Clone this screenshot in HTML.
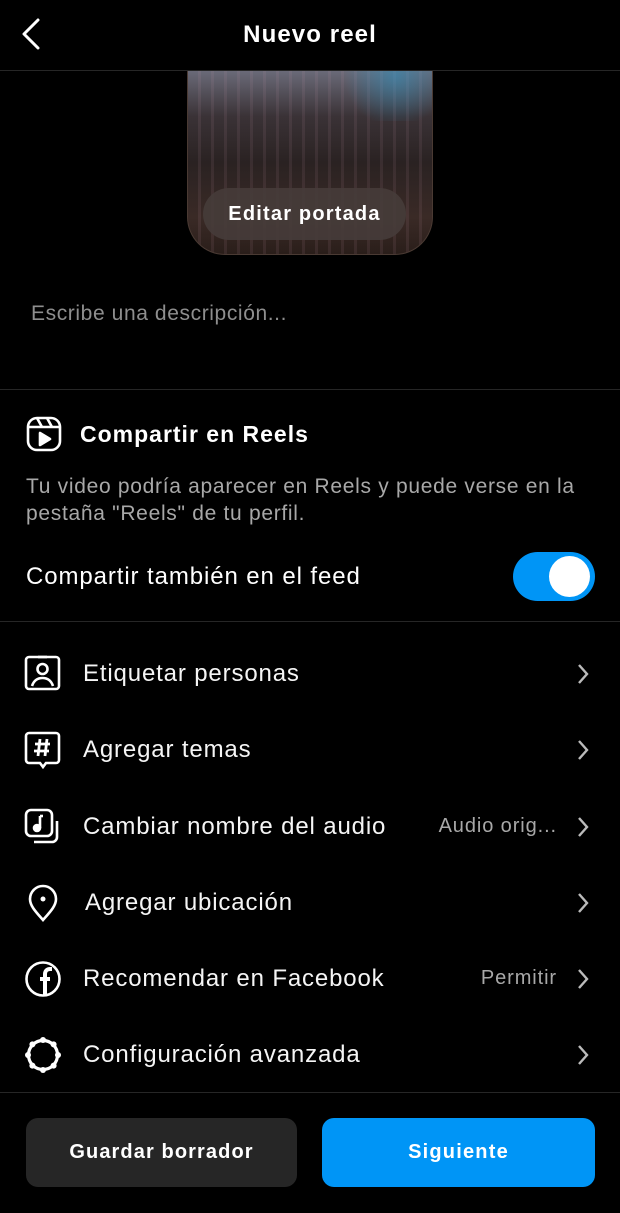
<!DOCTYPE html>
<html><head><meta charset="utf-8"><style>
*{margin:0;padding:0;box-sizing:border-box}
body{width:620px;height:1213px;background:#000;color:#fff;font-family:"Liberation Sans",sans-serif;position:relative;overflow:hidden}
.a{position:absolute;white-space:nowrap}
.sep{position:absolute;left:0;width:620px;height:1px;background:#262626}
.row{position:absolute;left:0;width:620px;height:40px}
.row .t{position:absolute;left:83px;top:7px;font-size:24px;letter-spacing:0.85px;color:#f5f5f5;white-space:nowrap}
.row .r{position:absolute;right:63px;top:9px;font-size:20px;letter-spacing:0.9px;color:#a8a8a8}
.row svg.ic{position:absolute;left:24px;top:2px}
.row svg.ch{position:absolute;left:576px;top:10px}
</style></head><body>
<svg class="a" style="left:20px;top:18px" width="22" height="32" viewBox="0 0 22 32"><path d="M18 2 L4 16 L18 30" stroke="#fff" stroke-width="3" fill="none" stroke-linecap="round" stroke-linejoin="round"/></svg>
<div class="a" style="left:0;width:620px;top:21px;text-align:center;font-size:24px;letter-spacing:1.1px;font-weight:bold">Nuevo reel</div>
<div class="sep" style="top:70px"></div>
<div class="a" style="left:187px;top:71px;width:246px;height:184px;border-radius:0 0 38px 38px;border:1px solid #4a3a33;border-top:none;overflow:hidden;background:linear-gradient(180deg,#6a6a78 0%,#3a3236 25%,#2a2222 50%,#3a2a26 80%,#2a1e1a 100%)">
<div class="a" style="left:0;top:0;width:246px;height:184px;background:repeating-linear-gradient(90deg,rgba(255,255,255,0) 0 10px,rgba(200,150,170,.1) 10px 13px)"></div>
<div class="a" style="left:150px;top:0;width:96px;height:50px;background:radial-gradient(circle at 60% 10%,rgba(40,150,200,.5),rgba(0,0,0,0) 70%)"></div>
<div class="a" style="left:15px;top:117px;width:203px;height:52px;border-radius:26px;background:rgba(70,60,58,.9);text-align:center;line-height:52px;font-size:20px;letter-spacing:1.2px;font-weight:bold">Editar portada</div>
</div>
<div class="a" style="left:31px;top:302px;font-size:21px;letter-spacing:0.6px;color:#8e8e8e">Escribe una descripción...</div>
<div class="sep" style="top:389px"></div>
<svg class="a" style="left:26px;top:416px" width="36" height="36" viewBox="0 0 36 36" fill="none" stroke="#fff" stroke-width="2.6"><rect x="2" y="2" width="32" height="32" rx="9"/><path d="M2 11H34M11 2L16 11M21 2L26 11"/><path d="M14 17V29L24 23Z" fill="#fff" stroke-linejoin="round"/></svg>
<div class="a" style="left:80px;top:421px;font-size:23px;letter-spacing:1px;font-weight:bold">Compartir en Reels</div>
<div class="a" style="left:26px;top:473px;width:594px;white-space:normal;font-size:21px;letter-spacing:0.7px;line-height:27px;color:#a8a8a8">Tu video podría aparecer en Reels y puede verse en la<br>pestaña "Reels" de tu perfil.</div>
<div class="a" style="left:26px;top:563px;font-size:24px;letter-spacing:0.9px">Compartir también en el feed</div>
<div class="a" style="left:513px;top:552px;width:82px;height:49px;border-radius:25px;background:#0095f6"><div class="a" style="left:36px;top:4px;width:41px;height:41px;border-radius:50%;background:#fff"></div></div>
<div class="sep" style="top:621px"></div>

<div class="row" style="top:653px"><svg class="ic" width="38" height="36" viewBox="0 0 38 36" fill="none" stroke="#fff" stroke-width="2.6"><rect x="2" y="2" width="33" height="32" rx="3"/><circle cx="18.5" cy="14" r="5"/><path d="M8 31c2-6 6-8 10.5-8s8.5 2 10.5 8"/><path d="M14 2h9"/></svg><div class="t">Etiquetar personas</div><svg class="ch" width="14" height="22" viewBox="0 0 14 22"><path d="M3 2L11 11L3 20" stroke="#bbb" stroke-width="2.4" fill="none"/></svg></div>
<div class="row" style="top:729px"><svg class="ic" width="38" height="38" viewBox="0 0 38 38" fill="none" stroke="#fff" stroke-width="2.6"><path d="M5 2h27a3 3 0 0 1 3 3v24a3 3 0 0 1-3 3h-10l-3 4-3-4h-11a3 3 0 0 1-3-3v-24a3 3 0 0 1 3-3z"/><path d="M16 8l-2 17M23 8l-2 17M11 13h15M10 20h15" stroke-width="2.8"/></svg><div class="t">Agregar temas</div><svg class="ch" width="14" height="22" viewBox="0 0 14 22"><path d="M3 2L11 11L3 20" stroke="#bbb" stroke-width="2.4" fill="none"/></svg></div>
<div class="row" style="top:806px"><svg class="ic" width="38" height="38" viewBox="0 0 38 38" fill="none" stroke="#fff" stroke-width="2.6"><rect x="2" y="2" width="26" height="26" rx="5"/><path d="M33 13v16a5 5 0 0 1-5 5H10"/><path d="M16 8v12" /><circle cx="13" cy="20" r="3" fill="#fff"/><path d="M16 8h3"/></svg><div class="t">Cambiar nombre del audio</div><div class="r">Audio orig...</div><svg class="ch" width="14" height="22" viewBox="0 0 14 22"><path d="M3 2L11 11L3 20" stroke="#bbb" stroke-width="2.4" fill="none"/></svg></div>
<div class="row" style="top:882px"><svg class="ic" width="38" height="38" viewBox="0 0 38 38" fill="none" stroke="#fff" stroke-width="2.6"><path d="M19 36C12 28 6 22 6 15a13 13 0 0 1 26 0c0 7-6 13-13 21z"/><circle cx="19" cy="15" r="2.5" fill="#fff" stroke="none"/></svg><div class="t" style="left:85px">Agregar ubicación</div><svg class="ch" width="14" height="22" viewBox="0 0 14 22"><path d="M3 2L11 11L3 20" stroke="#bbb" stroke-width="2.4" fill="none"/></svg></div>
<div class="row" style="top:958px"><svg class="ic" width="38" height="38" viewBox="0 0 38 38" fill="none" stroke="#fff" stroke-width="2.6"><circle cx="19" cy="19" r="16.5"/><path d="M21 36V19h5M16 19h10M21 35V14c0-3 2-5 5-5h2" stroke-width="4"/></svg><div class="t">Recomendar en Facebook</div><div class="r">Permitir</div><svg class="ch" width="14" height="22" viewBox="0 0 14 22"><path d="M3 2L11 11L3 20" stroke="#bbb" stroke-width="2.4" fill="none"/></svg></div>
<div class="row" style="top:1034px"><svg class="ic" width="38" height="38" viewBox="0 0 38 38" fill="none" stroke="#fff" stroke-width="3.2"><circle cx="19" cy="19" r="14.5"/><g fill="#fff" stroke="none"><circle cx="19" cy="4" r="3"/><circle cx="19" cy="34" r="3"/><circle cx="4" cy="19" r="3"/><circle cx="34" cy="19" r="3"/><circle cx="8.4" cy="8.4" r="3"/><circle cx="29.6" cy="8.4" r="3"/><circle cx="8.4" cy="29.6" r="3"/><circle cx="29.6" cy="29.6" r="3"/></g></svg><div class="t">Configuración avanzada</div><svg class="ch" width="14" height="22" viewBox="0 0 14 22"><path d="M3 2L11 11L3 20" stroke="#bbb" stroke-width="2.4" fill="none"/></svg></div>

<div class="sep" style="top:1092px"></div>
<div class="a" style="left:26px;top:1118px;width:271px;height:69px;border-radius:12px;background:#262626;text-align:center;line-height:69px;font-size:20px;letter-spacing:1.1px;font-weight:bold">Guardar borrador</div>
<div class="a" style="left:322px;top:1118px;width:273px;height:69px;border-radius:12px;background:#0095f6;text-align:center;line-height:69px;font-size:20px;letter-spacing:1.2px;font-weight:bold">Siguiente</div>
</body></html>
